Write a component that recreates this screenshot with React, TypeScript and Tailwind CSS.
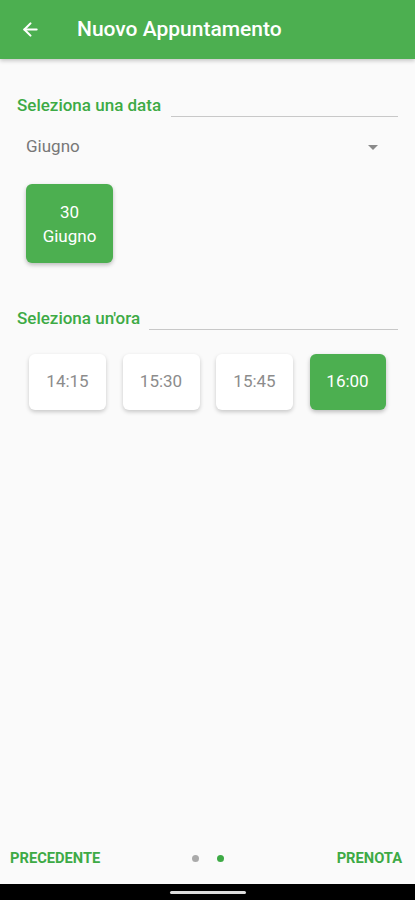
import { ArrowLeft } from "lucide-react";

const times = [
  { label: "14:15", active: false },
  { label: "15:30", active: false },
  { label: "15:45", active: false },
  { label: "16:00", active: true },
];

export default function App() {
  return (
    <div
      className="flex h-[900px] w-[415px] flex-col bg-[#fafafa]"
      style={{ fontFamily: "Roboto, 'Noto Sans', sans-serif" }}
    >
      {/* Toolbar */}
      <header className="flex h-[59px] shrink-0 items-center bg-[#4caf50] shadow-[0_2px_4px_rgba(0,0,0,0.2)]">
        <ArrowLeft className="ml-[20px] h-[21px] w-[21px] text-white" strokeWidth={2.4} />
        <h1 className="ml-[36px] text-[21px] font-medium text-white">Nuovo Appuntamento</h1>
      </header>

      <main className="flex-1 px-[17px]">
        {/* Date section */}
        <div className="mt-[35px] flex items-end">
          <span className="text-[17px] font-medium leading-[22px] text-[#3daa45]">Seleziona una data</span>
          <div className="mb-[-1px] ml-[10px] h-px flex-1 bg-[#c8c8c8]" />
        </div>

        <div className="mt-[20px] flex h-[22px] items-center justify-between pl-[9px] pr-[20px]">
          <span className="text-[17px] text-[#777]">Giugno</span>
          <span className="h-0 w-0 border-x-[5px] border-t-[5px] border-x-transparent border-t-[#8a8a8a]" />
        </div>

        <div className="mt-[26px] ml-[9px] flex h-[79px] w-[87px] flex-col items-center justify-center rounded-[6px] bg-[#4caf50] text-[17px] leading-[24px] text-white shadow-[0_2px_4px_rgba(0,0,0,0.25)]">
          <span>30</span>
          <span>Giugno</span>
        </div>

        {/* Time section */}
        <div className="mt-[44px] flex items-end">
          <span className="text-[17px] font-medium leading-[22px] text-[#3daa45]">Seleziona un'ora</span>
          <div className="mb-[-1px] ml-[9px] h-px flex-1 bg-[#c8c8c8]" />
        </div>

        <div className="mt-[25px] flex gap-[16.5px] pl-[12px]">
          {times.map((t) => (
            <div
              key={t.label}
              className={
                t.active
                  ? "flex h-[56px] w-[76px] items-center justify-center rounded-[6px] bg-[#4caf50] text-[17px] text-white shadow-[0_2px_4px_rgba(0,0,0,0.25)]"
                  : "flex h-[56px] w-[77px] items-center justify-center rounded-[6px] bg-white text-[17px] text-[#8c8c8c] shadow-[0_2px_4px_rgba(0,0,0,0.2)]"
              }
            >
              {t.label}
            </div>
          ))}
        </div>
      </main>

      {/* Footer */}
      <footer className="flex h-[50px] shrink-0 items-center justify-between pl-[10px] pr-[13px] pb-[2px]">
        <span className="w-[110px] text-[14.7px] font-bold text-[#3daa45]">PRECEDENTE</span>
        <div className="ml-[4px] flex items-center gap-[18px]">
          <span className="h-[7px] w-[7px] rounded-full bg-[#aaa]" />
          <span className="h-[7px] w-[7px] rounded-full bg-[#3daa45]" />
        </div>
        <span className="w-[110px] text-right text-[14.7px] font-bold text-[#3daa45]">PRENOTA</span>
      </footer>

      {/* System nav bar */}
      <div className="flex h-[16px] shrink-0 items-center justify-center bg-black">
        <span className="h-[3px] w-[76px] rounded-full bg-[#ddd]" />
      </div>
    </div>
  );
}
